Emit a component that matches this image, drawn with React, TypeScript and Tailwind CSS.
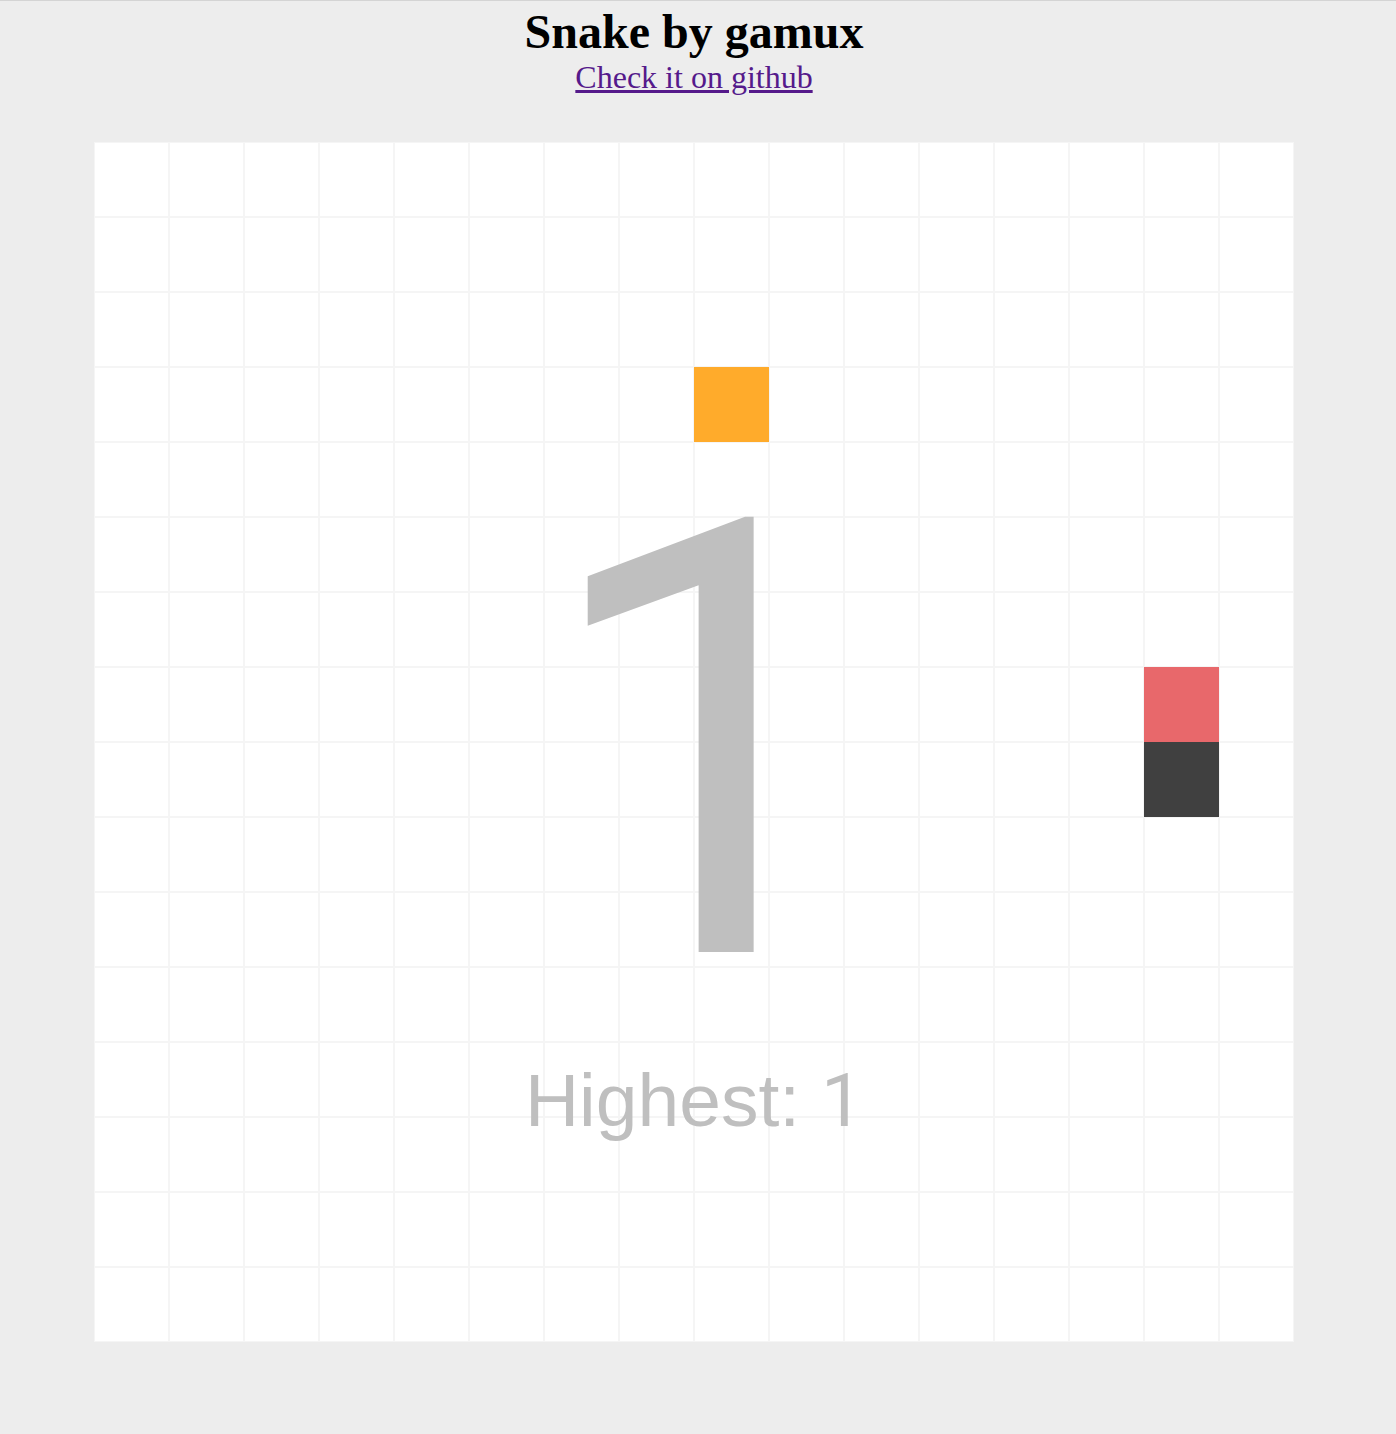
import React from 'react';

const SIZE = 16;

// board state: food at (8,3), snake head at (14,7), tail at (14,8)
const cellColor = (x: number, y: number) => {
  if (x === 8 && y === 3) return 'bg-[#ffab2b]';
  if (x === 14 && y === 7) return 'bg-[#e8686b]';
  if (x === 14 && y === 8) return 'bg-[#404040]';
  return 'bg-white';
};

export default function App() {
  const cells = [];
  for (let y = 0; y < SIZE; y++) {
    for (let x = 0; x < SIZE; x++) {
      const c = cellColor(x, y);
      cells.push(
        <div
          key={`${x}-${y}`}
          className={`w-[75px] h-[75px] ${c} ${c === 'bg-white' ? 'border border-[#f5f5f5]' : ''}`}
        />
      );
    }
  }

  return (
    <div className="min-h-[1434px] bg-[#ededed] border-t border-[#d4d4d4]">
      <div className="w-[1388px] pt-[3px]">
        <h1 className="text-center font-bold text-[48px] leading-[55px] text-black font-['Liberation_Serif',serif]">
          Snake by gamux
        </h1>
        <div className="text-center text-[32px] leading-[37px] font-['Liberation_Serif',serif]">
          <a href="#" className="text-[#551a8b] underline">
            Check it on github
          </a>
        </div>

        <div className="relative mx-auto mt-[46px] w-[1200px] h-[1200px] bg-white">
          <div className="grid grid-cols-[repeat(16,75px)]">{cells}</div>

          {/* score overlay */}
          <div className="absolute left-0 right-0 top-[298px] pl-[28px] text-center text-[609px] leading-none text-[#bfbfbf] font-['Roboto',sans-serif]">
            1
          </div>
          <div className="absolute left-0 right-0 top-[921px] text-center text-[75px] leading-none text-[#bfbfbf] font-['Liberation_Sans',Arial,sans-serif]">
            Highest: <span className="font-['Roboto',sans-serif]">1</span>
          </div>
        </div>
      </div>
    </div>
  );
}
